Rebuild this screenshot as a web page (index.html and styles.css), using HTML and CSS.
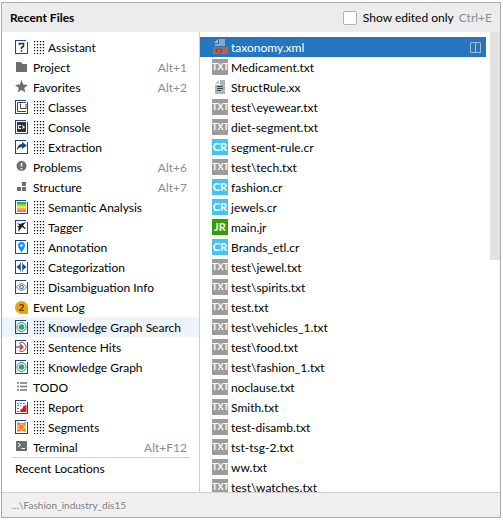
FILE: index.html
```html
<!DOCTYPE html>
<html lang="en">
<head>
<meta charset="utf-8">
<title>Recent Files</title>
<link rel="stylesheet" href="styles.css">
</head>
<body>
<svg class="defs" aria-hidden="true">
  <symbol id="frame" viewBox="0 0 14 14"><path d="M0 .5h11M.5 1v12M12.500 2v11M0 13.500h13" fill="none" stroke="#1d4a80"/></symbol>
  <symbol id="dots" viewBox="0 0 11 14"><path d="M.5 1v13M3.500 1v13M6.500 1v13M9.500 1v13" fill="none" stroke="#000010" stroke-width="1.300" stroke-dasharray="1.300 1.700"/></symbol>
  <symbol id="graph" viewBox="0 0 14 14"><use href="#frame"/><circle cx="6.500" cy="7" r="4.500" fill="#fff" stroke="#4a79a0"/><circle cx="6.500" cy="7" r="2.800" fill="#1fae58"/></symbol>
</svg>
<main class="popup">
  <header class="header">
    <h1>Recent Files</h1>
    <label class="toggle" for="edited"><input type="checkbox" id="edited"><span>Show edited only</span></label>
    <kbd>Ctrl+E</kbd>
  </header>
  <div class="body">
    <nav class="tools">
      <ul>
        <li><button class="row"><svg class="icon" viewBox="0 0 14 14"><use href="#frame"/><path d="M4.500 5V3.500h4v3L6.500 7.500v1.500M5.700 11h1.600" fill="none" stroke="#333" stroke-width="1.600"/></svg><svg class="dots"><use href="#dots"/></svg><span class="name">Assistant</span></button></li>
        <li><button class="row"><svg class="icon" viewBox="0 0 14 14"><path d="M1 2h5l1.500 2H12v8H1z" fill="#6e6e6e"/></svg><span class="name">Project</span><kbd>Alt+1</kbd></button></li>
        <li><button class="row"><svg class="icon" viewBox="0 0 14 14"><path d="m6.500 0 1.700 4.600 4.800.3-3.800 3 1.300 4.700-4-2.700-4 2.700 1.300-4.700L0 4.900l4.800-.3z" fill="#6e6e6e"/></svg><span class="name">Favorites</span><kbd>Alt+2</kbd></button></li>
        <li><button class="row"><svg class="icon" viewBox="0 0 14 14"><use href="#frame"/><path d="M11 2.500H2.500v9H11M5.500 3.500v5H11M11 4v5" fill="none" stroke="#444"/></svg><svg class="dots"><use href="#dots"/></svg><span class="name">Classes</span></button></li>
        <li><button class="row"><svg class="icon" viewBox="0 0 14 14"><use href="#frame"/><path d="M2 2h9v10H2z" fill="#303238"/><path d="M6 5.500H3.500v3H6M7 5.500l2.500 1.500L7 8.500" fill="none" stroke="#fff"/></svg><svg class="dots"><use href="#dots"/></svg><span class="name">Console</span></button></li>
        <li><button class="row"><svg class="icon" viewBox="0 0 14 14"><use href="#frame"/><path d="M2 10c0-4 2.500-6 5-6V2l5 3.500L7 9V7C5 7 3.500 8 2 10z" fill="#164b84"/></svg><svg class="dots"><use href="#dots"/></svg><span class="name">Extraction</span></button></li>
        <li><button class="row"><svg class="icon" viewBox="0 0 14 14"><circle cx="6.500" cy="6" r="5" fill="#6e6e6e"/><path d="M6.500 3v3.500M6.500 8v1.500" stroke="#fff" stroke-width="1.500"/></svg><span class="name">Problems</span><kbd>Alt+6</kbd></button></li>
        <li><button class="row"><svg class="icon" viewBox="0 0 14 14"><path d="M7 2h4v4H7zM2 7h4v4H2zM7 7h4v4H7z" fill="#6e6e6e"/></svg><span class="name">Structure</span><kbd>Alt+7</kbd></button></li>
        <li><button class="row"><svg class="icon" viewBox="0 0 14 14"><use href="#frame"/><path d="M2 2h9v2H2z" fill="#16b957"/><path d="M2 4h9v2H2z" fill="#8fda38"/><path d="M2 6h9v2H2z" fill="#ffe03c"/><path d="M2 8h9v2H2z" fill="#ffad4a"/><path d="M2 10h9v2H2z" fill="#f67863"/></svg><svg class="dots"><use href="#dots"/></svg><span class="name">Semantic Analysis</span></button></li>
        <li><button class="row"><svg class="icon" viewBox="0 0 14 14"><use href="#frame"/><path d="M2 3l3 1 6-2-3 3.500 3 3-1 .5-3-2-3.500 5V7.500L2 6.500l2.500-1z" fill="#222"/></svg><svg class="dots"><use href="#dots"/></svg><span class="name">Tagger</span></button></li>
        <li><button class="row"><svg class="icon" viewBox="0 0 14 14"><use href="#frame"/><path d="M6.500 12.500C4.500 9 3 7.500 3 5.500a3.500 3.500 0 0 1 7 0C10 7.500 8.500 9 6.500 12.500z" fill="#0796f5"/><circle cx="6.500" cy="5.500" r="1.300" fill="#fff"/></svg><svg class="dots"><use href="#dots"/></svg><span class="name">Annotation</span></button></li>
        <li><button class="row"><svg class="icon" viewBox="0 0 14 14"><use href="#frame"/><path d="M5 4v6L1.500 7zM8 4v6l3.500-3z" fill="#1d4a80"/><path d="M5.500 2.500v9M7.500 2.500v9" stroke="#5b82ab"/></svg><svg class="dots"><use href="#dots"/></svg><span class="name">Categorization</span></button></li>
        <li><button class="row"><svg class="icon" viewBox="0 0 14 14"><use href="#frame"/><path d="M1.500 7Q6.500 0 11.500 7 6.500 14 1.500 7z" fill="#fff" stroke="#5b82ab"/><circle cx="6.500" cy="7" r="1.800" fill="none" stroke="#1d4a80"/></svg><svg class="dots"><use href="#dots"/></svg><span class="name">Disambiguation Info</span></button></li>
        <li><button class="row"><span class="count">2</span><span class="name">Event Log</span></button></li>
        <li><button class="row hovered"><svg class="icon"><use href="#graph"/></svg><svg class="dots"><use href="#dots"/></svg><span class="name">Knowledge Graph Search</span></button></li>
        <li><button class="row"><svg class="icon" viewBox="0 0 14 14"><use href="#frame"/><path d="M4 3.300a4.500 4.500 0 1 1 0 7.400" fill="none" stroke="#666"/><path d="M1 7h6" stroke="#333"/><path d="M5 4.500 7.500 7 5 9.500" fill="none" stroke="#e33" stroke-width="2"/></svg><svg class="dots"><use href="#dots"/></svg><span class="name">Sentence Hits</span></button></li>
        <li><button class="row"><svg class="icon"><use href="#graph"/></svg><svg class="dots"><use href="#dots"/></svg><span class="name">Knowledge Graph</span></button></li>
        <li><button class="row"><svg class="icon" viewBox="0 0 14 14"><path d="M2 3h2M5 3h7M2 6.500h2M5 6.500h7M2 10h2M5 10h7" stroke="#777" stroke-width="1.500"/></svg><span class="name">TODO</span></button></li>
        <li><button class="row"><svg class="icon" viewBox="0 0 14 14"><use href="#frame"/><path d="M2 3.500h9M2 5.500h4M2 8.500h3M2 11.500h4" stroke="#777" stroke-dasharray="2 1"/><path d="M5.500 12V9.500l2-1 1-2.500 3-1v7z" fill="#f00b17"/></svg><svg class="dots"><use href="#dots"/></svg><span class="name">Report</span></button></li>
        <li><button class="row"><svg class="icon" viewBox="0 0 14 14"><use href="#frame"/><path d="M2 2l3 1h3l3-1-.5 3v4l.5 3-3-1H5l-3 1 .5-3V5z" fill="#f57c1f"/><circle cx="6.500" cy="7" r="2.800" fill="none" stroke="#fff" stroke-dasharray="2 1"/></svg><svg class="dots"><use href="#dots"/></svg><span class="name">Segments</span></button></li>
        <li><button class="row"><svg class="icon" viewBox="0 0 14 14"><path d="M1 1h11v10H1z" fill="#6e6e6e"/><path d="M3 3l2.500 2L3 7M6.500 8.500H10" fill="none" stroke="#fff"/></svg><span class="name">Terminal</span><kbd>Alt+F12</kbd></button></li>
      </ul>
      <hr>
      <button class="row">Recent Locations</button>
    </nav>
    <section class="files" aria-label="Files">
      <ul>
        <li><button class="row selected"><svg class="file" viewBox="0 0 16 16"><path d="M7 0h6v7H3V5h4z" fill="#8fa7ba"/><path d="M6 0v4H2z" fill="#aabdca"/><path d="M1 8h15v7H1z" fill="#b5654d"/><path d="M6 9.500l-2 2 2 2M8 9.500l2 2-2 2" fill="none" stroke="#3a302d"/></svg><span class="name">taxonomy.xml</span><svg class="split" viewBox="0 0 11 11"><path d="M.5.5h10v10H.5zM5.500 0v11" fill="none" stroke="#a9bccd"/></svg></button></li>
        <li><button class="row"><span class="file txt">TXT</span><span class="name">Medicament.txt</span></button></li>
        <li><button class="row"><svg class="file" viewBox="0 0 16 16"><path d="M8 1h5v14H3V6h5z" fill="#aab4bb"/><path d="M7 1v4H3z" fill="#bcc5ca"/><path d="M5 7.500h6M5 9.500h6M5 11.500h4" stroke="#3f474d"/></svg><span class="name">StructRule.xx</span></button></li>
        <li><button class="row"><span class="file txt">TXT</span><span class="name">test\eyewear.txt</span></button></li>
        <li><button class="row"><span class="file txt">TXT</span><span class="name">diet-segment.txt</span></button></li>
        <li><button class="row"><span class="file cr">CR</span><span class="name">segment-rule.cr</span></button></li>
        <li><button class="row"><span class="file txt">TXT</span><span class="name">test\tech.txt</span></button></li>
        <li><button class="row"><span class="file cr">CR</span><span class="name">fashion.cr</span></button></li>
        <li><button class="row"><span class="file cr">CR</span><span class="name">jewels.cr</span></button></li>
        <li><button class="row"><span class="file jr">JR</span><span class="name">main.jr</span></button></li>
        <li><button class="row"><span class="file cr">CR</span><span class="name">Brands_etl.cr</span></button></li>
        <li><button class="row"><span class="file txt">TXT</span><span class="name">test\jewel.txt</span></button></li>
        <li><button class="row"><span class="file txt">TXT</span><span class="name">test\spirits.txt</span></button></li>
        <li><button class="row"><span class="file txt">TXT</span><span class="name">test.txt</span></button></li>
        <li><button class="row"><span class="file txt">TXT</span><span class="name">test\vehicles_1.txt</span></button></li>
        <li><button class="row"><span class="file txt">TXT</span><span class="name">test\food.txt</span></button></li>
        <li><button class="row"><span class="file txt">TXT</span><span class="name">test\fashion_1.txt</span></button></li>
        <li><button class="row"><span class="file txt">TXT</span><span class="name">noclause.txt</span></button></li>
        <li><button class="row"><span class="file txt">TXT</span><span class="name">Smith.txt</span></button></li>
        <li><button class="row"><span class="file txt">TXT</span><span class="name">test-disamb.txt</span></button></li>
        <li><button class="row"><span class="file txt">TXT</span><span class="name">tst-tsg-2.txt</span></button></li>
        <li><button class="row"><span class="file txt">TXT</span><span class="name">ww.txt</span></button></li>
        <li><button class="row"><span class="file txt">TXT</span><span class="name">test\watches.txt</span></button></li>
      </ul>
      <div class="track"><div class="thumb"></div></div>
    </section>
  </div>
  <footer class="footer">...\Fashion_industry_dis15</footer>
</main>
</body>
</html>
```
FILE: styles.css
```css
* {
  box-sizing: border-box;
}

body {
  margin: 0;
  padding: 2px 2px 2px 1px;
  height: 100vh;
  background: #fff;
  color: #000;
  font: 12px/20px Lato, "Open Sans", sans-serif;
}

.defs {
  position: absolute;
  width: 0;
  height: 0;
}

.popup {
  display: flex;
  flex-direction: column;
  height: 100%;
  border: 1px solid #a9a9a9;
}

.header {
  display: flex;
  flex: none;
  align-items: center;
  height: 29px;
  padding: 0 8px;
  background: #ececec;
}

h1 {
  flex: 1;
  margin: 0;
  font-size: 12px;
  font-weight: 700;
}

.toggle {
  display: flex;
  align-items: center;
  gap: 6px;
  margin-right: 5px;
}

.toggle input {
  appearance: none;
  width: 14px;
  height: 14px;
  margin: 0;
  border: 1px solid #b0b0b0;
  border-radius: 2px;
  background: #fff;
}

kbd {
  color: #8c8c8c;
  font: inherit;
}

.body {
  display: grid;
  flex: 1;
  grid-template-columns: 198px 1fr;
  min-height: 0;
}

ul {
  margin: 0;
  padding: 0;
  list-style: none;
}

.tools {
  padding-top: 5px;
  border-right: 1px solid #d0d0d0;
}

.row {
  display: flex;
  align-items: center;
  width: 100%;
  height: 20px;
  padding: 0 12px 0 13px;
  border: 0;
  background: none;
  color: inherit;
  font: inherit;
  text-align: left;
  white-space: nowrap;
}

.name,
.row kbd {
  padding-top: 2px;
  line-height: 18px;
}

.row kbd {
  margin-left: auto;
}

.hovered {
  background: #edf5fc;
}

.icon {
  flex: none;
  width: 14px;
  height: 14px;
  margin-right: 4px;
}

.count {
  width: 13px;
  height: 13px;
  margin-right: 5px;
  border-radius: 7px 7px 0 7px;
  background: #efa20c;
  color: #3b3325;
  font-size: 10px;
  font-weight: 700;
  line-height: 13px;
  text-align: center;
}

.dots {
  flex: none;
  width: 11px;
  height: 14px;
  margin: 0 3px 0 1px;
}

hr {
  height: 1px;
  margin: 0 9px 1px 10px;
  border: 0;
  background: #d0d0d0;
}

.files {
  display: grid;
  grid-template-columns: 1fr 10px;
  gap: 4px;
  overflow: hidden;
}

.files ul {
  padding-top: 5px;
}

.files .row {
  padding: 0 5px 0 12px;
}

.files .selected {
  background: #2675bf;
  color: #fff;
}

.file {
  flex: none;
  width: 16px;
  height: 16px;
  margin-right: 3px;
  color: #fff;
  font-size: 11px;
  font-weight: 700;
  line-height: 16px;
  text-align: center;
}

.txt {
  background: #9c9c9c;
  font-size: 9px;
}

.cr {
  background: #43c5f0;
}

.jr {
  background: #31a000;
}

.split {
  width: 11px;
  height: 11px;
  margin-left: auto;
}

.track {
  height: 100%;
}

.thumb {
  height: 49%;
  background: #e2e2e2;
}

.footer {
  flex: none;
  height: 25px;
  padding: 2px 10px;
  border-top: 1px solid #d0d0d0;
  background: #f0f0f0;
  color: #808080;
  font-size: 10px;
}
```
